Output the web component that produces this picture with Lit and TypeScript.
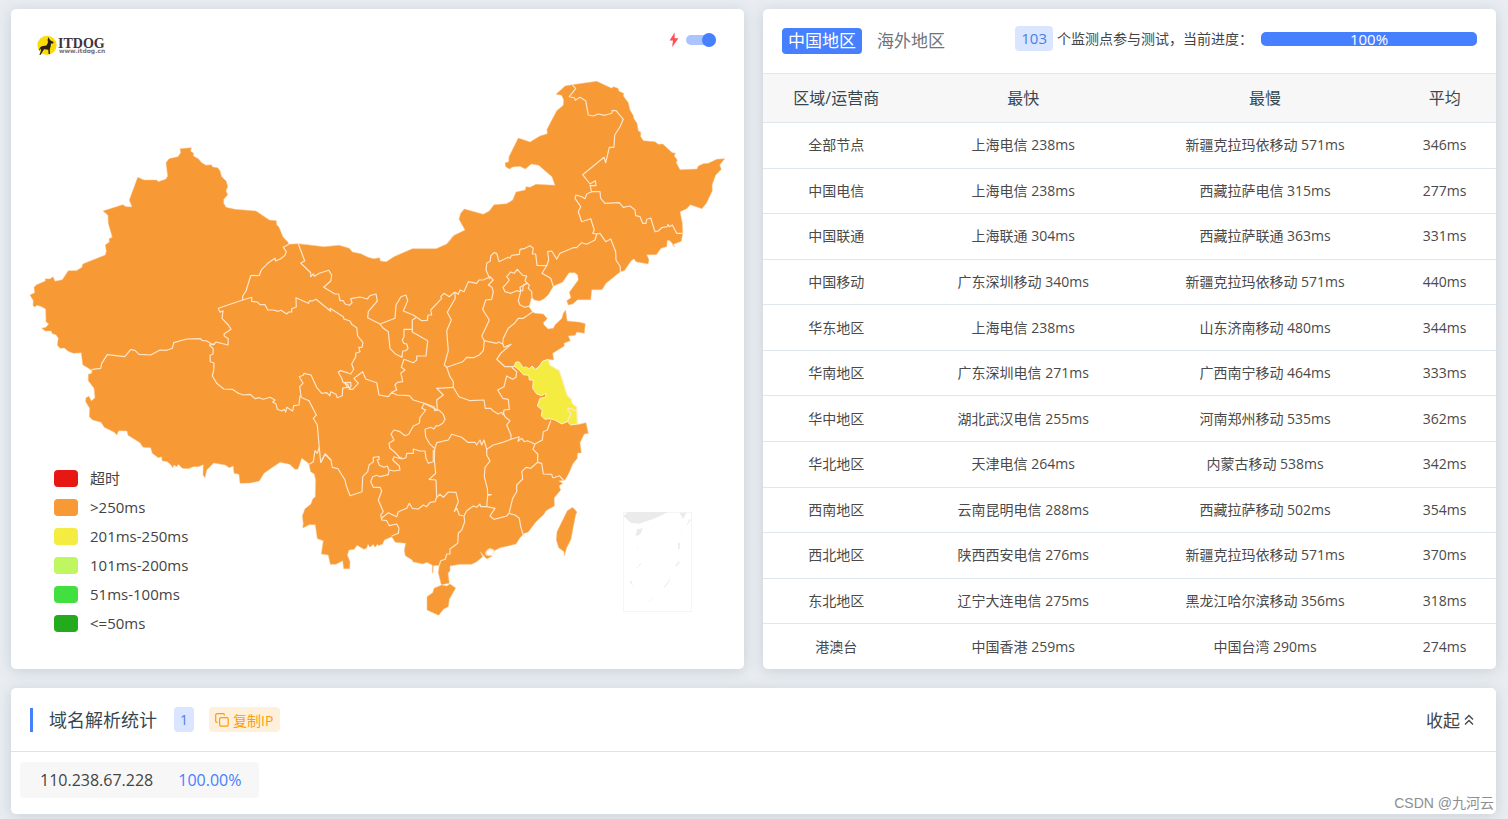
import { LitElement, html, svg, css } from "lit";
import { customElement, property, state } from "lit/decorators.js";

/** Map geometry is stored in sheets: an origin plus points at three units per map unit. */
type Sheet = [x: number, y: number, points: string];

const SHEET_NW = [20, 130] as const;
const SHEET_MID = [280, 230] as const;
const SHEET_NE = [440, 70] as const;
const SHEET_S = [290, 380] as const;
const SHEET_SW = [70, 330] as const;
const SHEET_E = [480, 290] as const;
const SHEET_SEA = [600, 490] as const;

const on = (o: readonly [number, number], points: string): Sheet => [o[0], o[1], points];

const trace = (...sheets: Sheet[]): string =>
  sheets
    .map(([x, y, pts]) =>
      pts
        .trim()
        .split(/\s+/)
        .map((p) => {
          const [px, py] = p.split(",").map(Number);
          return (x + px / 3).toFixed(1) + "," + (y + py / 3).toFixed(1);
        })
        .join(" "),
    )
    .join(" ");

const MAINLAND = trace(
  on(SHEET_NW, `30,495 44,488 42,472 50,464 76,453 76,446 90,447 99,440 105,454 127,449 145,422 169,422 186,412 188,402 256,375 259,363 256,345 268,336 267,326 277,322 265,280 264,256 249,243 308,224 318,230 336,231 328,210 353,142 372,150 410,150 415,155 438,147 443,138 438,98 447,86 474,80 482,68 480,56 514,53 512,64 521,70 520,78 535,86 545,98 558,106 574,104 578,111 593,113 600,122 605,140 619,154 623,170 618,183 623,194 611,208 611,220 618,232 645,238 708,243 748,270 769,272 770,284 777,292 789,321 804,337 806,343 835,341`),
  on(SHEET_MID, `55,41 132,50 177,46 208,55 217,66 242,71 264,82 282,86 299,83 301,93 319,95 342,80 397,56 468,56 500,42 522,17`),
  on(SHEET_NE, `20,523 40,497 75,480 57,448 62,430 73,417 130,433 148,423 162,404 200,401 218,390 228,366 256,360 258,350 270,352 288,343 345,346 336,320 296,286 274,282 256,297 240,289 218,291 208,297 197,290 195,279 206,275 207,260 235,204 270,216 300,198 322,191 321,178 350,122 370,106 371,90 365,76 348,73 375,48 397,44 470,34 515,55 520,50 534,55 537,64 551,70 550,78 565,98 570,120 580,137 581,145 591,160 595,183 602,186 602,200 610,212 645,215 655,223 668,222 697,248 706,249 703,258 712,270 709,278 720,299 771,297 775,288 790,281 805,280 830,268 854,266 839,285 844,298 827,315 816,345 817,362 800,398 786,416 751,404 740,416 720,425 727,460 728,490 724,514 697,524 705,531 700,524 690,512 682,511 680,530 663,535 649,554 620,554 627,570 624,582 588,575 582,566 573,573 553,602 541,605 498,640 486,659 455,659 452,689 413,689 398,702 385,705 380,692 393,683 388,667 415,630 413,615 405,608 387,608 368,636 340,649 325,674`),
  on(SHEET_E, `190,28 178,33 163,30 155,20 147,50 157,66 165,70 190,72 202,86 190,98 192,104 204,117 220,115 225,105 246,85 250,70 257,60 260,85 262,93 300,97 316,101 313,130 290,126 286,136 265,138 271,152 252,160 253,168 218,190 221,210 204,208 210,226 238,242 262,318 274,328 276,340 290,352 292,402`),
  on(SHEET_S, `862,134 888,128 895,160 883,162 870,188 874,218 862,220 862,235 848,252 840,272 832,288 825,300 806,303 818,310 807,318 812,330 793,353 793,378 768,392 762,403 738,425 714,457 703,460 690,473 678,492 650,499 630,503 612,513 610,508 597,506 586,517 590,525 607,528 590,537 575,520 571,516 578,530 560,545 545,553 510,553 480,558 480,572 474,580 478,610 454,614 445,578 448,556 430,557 429,578 427,578 427,556 411,547 398,552 368,545 367,540 346,527 343,510 347,490 316,487 305,470 283,480 278,492 265,497 263,492 255,502 250,493 240,502 234,493 230,504 222,508 201,496 193,508 177,510 172,525 180,545 179,566 161,566 158,542 138,553 121,553 115,525 94,522 100,482 82,476 76,434 58,434 38,444 40,430 37,408 45,386 63,372 68,357 76,350 77,300 73,282 62,275 56,250`),
  on(SHEET_SW, `695,385 684,417 675,418 659,403 630,397 600,417 582,430 568,453 540,459 510,460 507,433 492,430 490,408 478,413 466,405 431,399 410,420 405,443 399,435 400,404 385,410 370,410 355,416 337,415 325,403 321,410 312,405 308,413 303,405 292,395 276,392 275,380 265,383 247,370 242,353 219,352 210,338 174,316 171,303 146,302 140,315 133,307 103,292 93,277 68,270 58,260 59,235 47,215 48,203 57,199 64,213 75,203 72,175 55,152 55,133 65,130 66,122`),
  on(SHEET_NW, `214,720 188,704 184,668 160,670 145,664 133,654 120,655 112,645 115,625 108,614 97,611 94,603 76,603 65,595 78,592 86,582 78,575 77,537 62,529 50,526 45,531 39,527 40,512 30,495`),
);

const HAINAN = trace(on(SHEET_S, `432,625 455,615 470,618 480,612 497,624 478,658 475,680 461,687 446,706 411,690 411,650 428,638`));
const TAIWAN = trace(on(SHEET_S, `848,382 861,396 857,404 850,440 843,478 830,503 823,528 822,515 806,503 799,480 801,455 832,392`));
const JIANGSU = trace(on(SHEET_E, `102,228 108,216 118,216 130,234 136,230 148,236 156,228 167,238 180,226 187,214 204,208 210,226 238,242 262,318 274,328 276,340 290,352 292,402 272,405 262,395 245,402 225,390 207,386 195,388 184,378 187,360 172,348 180,325 197,322 197,310 185,317 170,312 158,295 160,270 148,270 146,256 130,254 118,240`));
const SHANGHAI = trace(on(SHEET_E, `262,395 273,370 263,362 265,354 278,358 290,364`));

const BORDERS: string[] = [
  // Xinjiang, Qinghai, Tibet
  trace(on(SHEET_NW, `806,343 790,352 799,365 795,376 782,386 767,393 765,385 743,400 725,418 718,436 692,437 678,483 668,498 668,510 595,535 600,547 609,542 606,565 625,585 633,598 612,612 613,618 625,626 624,645 588,636 580,645 560,633 545,631 542,626 500,627 461,638 457,655 440,661 420,660 392,675 357,673 345,661 332,659 314,680 262,674 245,700 242,715 218,718 214,722`)),
  trace(
    on(SHEET_NW, `585,641 568,645 580,657 579,673 570,676 571,695 582,699 581,720 577,738 590,760 611,777 637,778 655,790`),
    on(SHEET_SW, `502,188 520,195 540,193 556,206 568,203 580,208 600,202 615,210 608,216 618,222 622,238 635,243 642,238 647,246 650,232 668,243 671,227 687,225 690,197`),
  ),
  trace(
    on(SHEET_NW, `668,510 695,502 695,514 712,516 720,524 735,524 743,540 760,540 775,544 783,541 800,552 806,546 815,546 815,536 829,531 828,503`),
    on(SHEET_MID, `85,220 90,212 97,213 108,208 152,244 150,235 190,260 192,267 210,273 215,283 230,293 233,318 249,338 246,352 236,352 240,365 227,370 227,380 215,402 221,418 212,432 202,428 181,422 175,427 185,445 190,458 212,457 213,467 208,478 205,465 195,460 203,472 188,474 187,497 172,503 168,493 152,485 150,497 140,488 125,490 110,472 93,435 72,430 70,436 58,440 69,460 59,470 63,498`),
  ),
  trace(on(SHEET_SW, `690,197 696,203 717,212 739,255 730,265 742,285 748,355 752,397 765,372 780,388`)),
  trace(on(SHEET_SW, `748,352 742,370 735,362 730,395 718,403`)),
  // Sichuan, Yunnan, Guizhou, Chongqing
  trace(on(SHEET_S, `92,248 106,222 123,240 127,262 144,266 165,300 168,315 180,347 216,335 218,290 233,275 237,255 250,245 250,232 267,230 268,237 262,240 268,256 282,262 292,258 297,270 295,284 270,290 260,286 248,290 242,305 250,322 270,322 275,333 265,360 280,395 272,405 275,418`)),
  trace(on(SHEET_S, `297,270 312,273 330,270 328,258 308,240 312,230 332,236 318,220 300,205 297,190 312,180 303,162 312,150 330,155 345,167 356,163 370,138 388,130 390,112 407,90 395,85 403,70 432,80 434,92 447,90 460,103 465,118 458,130 445,138 438,137 432,147 422,142 405,148 407,170 418,190 434,206`)),
  trace(on(SHEET_S, `332,230 336,237 348,233 350,220 370,220 370,207 390,213 405,213 408,235 415,250 430,245 430,210`)),
  // Gansu, Ningxia, Shaanxi
  trace(on(SHEET_MID, `208,478 218,478 235,460 222,445 248,425 257,447 290,458 297,495 325,500 335,487 350,495 388,497 400,510 430,519 472,540 470,510 490,495 470,475 520,472`)),
  trace(on(SHEET_MID, `335,487 350,480 345,465 352,457 368,455 365,440 362,430 375,420 364,412 372,388 400,398 410,390 410,378 438,378 443,332 397,306 397,270 410,262`)),
  trace(on(SHEET_MID, `397,298 372,298 372,320 367,330 371,340 380,342 384,355 378,362 368,363 366,382 345,371 330,355 325,305 308,293 300,282 345,265 348,225 363,200 378,195 383,212 370,243 400,255 410,262 425,272 442,271 444,255 455,255 452,240 485,205 482,200 492,190 508,200 524,186`)),
  trace(on(SHEET_MID, `55,41 74,93 62,99 92,128 92,140 100,132 103,139 118,130 146,121 155,135 152,153 131,172 165,192 176,192 180,212 190,212 195,222 208,226 216,218 212,206 240,201 262,207 270,197 288,192 292,213 265,245 263,263 300,282`)),
  trace(on(SHEET_MID, `524,186 526,205 502,247 514,270 500,302 505,362 493,405 500,412 510,440 520,455 520,472 537,500 570,512 612,510 616,535 632,535 640,543 655,552 665,547 670,556`)),
  trace(on(SHEET_MID, `524,186 535,193 540,180 552,185 565,155 590,160 597,150 610,150 630,140 640,150 625,165 636,172 640,185 635,208 617,210 608,238 615,250 628,270 614,300 605,318 613,332 610,362 598,375 580,383 560,382 548,395 500,412`)),
  // Hebei, Beijing, Tianjin
  trace(on(SHEET_NE, `150,628 138,600 140,580 151,573 152,558 162,548 170,550 177,575 205,562 210,565 215,556 238,553 240,538 255,535 270,527 280,535 277,552 287,552 291,586 320,587 306,610 332,625 340,649`)),
  trace(on(SHEET_NE, `242,665 230,662 212,670 195,665 189,652 200,640 208,630 200,620 212,606 222,610 232,598 248,616 260,618 255,632 262,640 240,652 242,665 235,692 240,705 255,712 268,708`)),
  trace(on(SHEET_NE, `242,662 248,662 250,645 262,640 268,645 265,655 275,665 276,681`)),
  // Liaoning, Jilin, Heilongjiang
  trace(on(SHEET_NE, `320,587 326,570 323,545 335,543 350,567 360,550 400,533 410,533 425,518 440,523 465,510 470,492`)),
  trace(on(SHEET_NE, `397,44 407,56 388,80 404,84 406,91 420,82 437,92 445,135 460,138 475,132 495,136 515,130 517,121 528,122 550,148 540,170 524,195 522,232 508,232 497,278 492,262 428,314 450,342 466,332 468,347 450,347 455,365 480,365 482,385 495,400 538,398 550,412 570,408 585,420 587,437 600,440 608,460 618,460 620,448 632,444 645,485 655,483 665,473 682,470 684,463 688,470 697,465 710,490 728,490`)),
  trace(on(SHEET_NE, `455,365 440,372 435,386 425,380 408,375 405,385 422,410 415,425 425,455 452,446 463,480 458,490 470,492 480,490 497,515 512,507 527,545 528,570 541,590 541,605`)),
  // Shandong, Henan, Anhui
  trace(on(SHEET_E, `157,66 130,85 115,85 105,98 85,115 70,145 68,160 72,172 93,163 62,190 50,208 75,230 102,230`)),
  trace(on(SHEET_E, `12,152 50,160 56,156 68,162`)),
  trace(on(SHEET_E, `95,232 110,245 108,262 98,268 80,258 72,290 53,300 62,315 68,325 85,328 88,358 72,360 70,375`)),
  // Hubei, Hunan, Jiangxi, Zhejiang, Fujian
  trace(on(SHEET_S, `640,98 645,110 660,122 650,135 663,165 663,178 635,188 610,195 590,208 582,180 575,195 570,180 560,195 555,187 533,187 515,172 485,163 475,180 440,188 434,206 433,240 437,280 418,298 438,300 440,352`)),
  trace(on(SHEET_S, `663,178 688,170 684,184 695,175 703,185 712,182 735,192 757,180 760,155 772,150 782,122`)),
  trace(on(SHEET_S, `735,192 729,208 743,222 743,247 755,250 760,282 785,283 788,293 795,292 808,287 820,300`)),
  trace(on(SHEET_S, `743,247 722,265 708,262 695,275 698,297 680,315 680,335 668,355 657,400 650,408 612,418 600,408 615,385 590,380`)),
  trace(on(SHEET_S, `590,208 590,225 600,243 585,262 583,290 592,325 593,343 604,344 593,346 590,380 572,380 570,372 560,382 550,378 530,392 522,408`)),
  // Guangdong, Guangxi
  trace(on(SHEET_S, `657,400 675,405 688,415 692,440 698,460 703,470`)),
  trace(on(SHEET_S, `440,352 435,365 420,367 410,380 400,375 385,387 367,385 358,370 350,385 325,395 320,410 295,398 275,414 275,420 290,422 298,437 320,432 327,445 325,460 305,468`)),
  trace(on(SHEET_S, `440,352 450,343 460,352 475,336 498,337 505,365 493,395 500,385 508,405 522,408 524,425 515,450 505,460 503,490 480,507 480,522 470,522 466,538 452,542 448,556`)),
  trace(on(SHEET_S, `610,522 612,512 600,506 590,513 588,524 600,526`)),
];

const SEA: string[] = [
  `70,78 85,66 205,66 165,85 118,101 92,98`,
  `238,68 259,68 250,87`,
  `111,118 129,115 121,133 107,139`,
  `234,158 239,158 239,177 234,177`,
  `237,212 239,217 230,229 226,229`,
  `270,86 272,90 262,105 260,103`,
  `210,266 211,269 195,292 191,292`,
  `90,273 95,273 98,292`,
  `123,219 124,221 111,235 109,235`,
  `164,321 150,332 146,333`,
  `109,168 113,175 117,188`,
  `250,122 240,136 237,138`,
].map((p) => trace(on(SHEET_SEA, p)));

interface Row {
  region: string;
  fastest: string;
  slowest: string;
  average: string;
}

const ROWS: Row[] = [
  ["全部节点", "上海电信 238ms", "新疆克拉玛依移动 571ms", "346ms"],
  ["中国电信", "上海电信 238ms", "西藏拉萨电信 315ms", "277ms"],
  ["中国联通", "上海联通 304ms", "西藏拉萨联通 363ms", "331ms"],
  ["中国移动", "广东深圳移动 340ms", "新疆克拉玛依移动 571ms", "440ms"],
  ["华东地区", "上海电信 238ms", "山东济南移动 480ms", "344ms"],
  ["华南地区", "广东深圳电信 271ms", "广西南宁移动 464ms", "333ms"],
  ["华中地区", "湖北武汉电信 255ms", "河南郑州移动 535ms", "362ms"],
  ["华北地区", "天津电信 264ms", "内蒙古移动 538ms", "342ms"],
  ["西南地区", "云南昆明电信 288ms", "西藏拉萨移动 502ms", "354ms"],
  ["西北地区", "陕西西安电信 276ms", "新疆克拉玛依移动 571ms", "370ms"],
  ["东北地区", "辽宁大连电信 275ms", "黑龙江哈尔滨移动 356ms", "318ms"],
  ["港澳台", "中国香港 259ms", "中国台湾 290ms", "274ms"],
].map(([region, fastest, slowest, average]) => ({ region, fastest, slowest, average }));

@customElement("latency-map")
export class LatencyMap extends LitElement {
  static styles = css`
    :host {
      display: block;
      position: relative;
    }
    .map {
      display: block;
      width: 100%;
      height: auto;
    }
    .land {
      fill: #f79934;
      stroke: #f9c48b;
      stroke-width: 0.5;
    }
    .fast {
      fill: #f5ec42;
      stroke: #fdf3c4;
    }
    .border {
      fill: none;
      stroke: #fee6cb;
      stroke-width: 1.2;
      stroke-linejoin: round;
    }
    .sea {
      fill: #ebebeb;
    }
    .frame {
      fill: none;
      stroke: #f5f5f5;
    }
    .top {
      position: absolute;
      top: 22px;
      left: 24px;
      right: 28px;
      display: flex;
      justify-content: space-between;
      align-items: flex-start;
    }
    .logo {
      width: 76px;
      height: 28px;
    }
    .brand {
      font: 700 14px "Liberation Serif", serif;
      fill: #40343a;
    }
    .site {
      font: 700 6px "DejaVu Sans", sans-serif;
      fill: #7a7074;
    }
    .mode {
      display: flex;
      align-items: center;
      gap: 7px;
      height: 18px;
    }
    .bolt {
      width: 10px;
      height: 16px;
      fill: #ff4d52;
    }
    .switch {
      appearance: none;
      position: relative;
      margin: 0;
      width: 30px;
      height: 10px;
      border-radius: 5px;
      background: #abc4ff;
    }
    .switch::before {
      content: "";
      position: absolute;
      top: -2px;
      left: 0;
      width: 14px;
      height: 14px;
      border-radius: 50%;
      background: #4680ff;
    }
    .switch:checked::before {
      left: auto;
      right: 0;
    }
    .legend {
      position: absolute;
      left: 43px;
      bottom: 37px;
      display: grid;
      gap: 12px;
      margin: 0;
      padding: 0;
      list-style: none;
    }
    .item {
      display: flex;
      align-items: center;
      gap: 12px;
      height: 17px;
      font-size: 15px;
      line-height: 16px;
      color: #444;
    }
    .text {
      padding-bottom: 2px;
    }
    .swatch {
      width: 24px;
      height: 17px;
      border-radius: 4px;
    }
    .red {
      background: #e71713;
    }
    .orange {
      background: #f79934;
    }
    .yellow {
      background: #f5ec42;
    }
    .lime {
      background: #bff760;
    }
    .green {
      background: #42df41;
    }
    .dark {
      background: #23aa1d;
    }
  `;

  render() {
    return html`
      <svg class="map" viewBox="11 9 733 660" role="img" aria-label="中国地区">
        <polygon class="land" points=${MAINLAND}></polygon>
        <polygon class="land" points=${HAINAN}></polygon>
        <polygon class="land" points=${TAIWAN}></polygon>
        ${BORDERS.map((b) => svg`<polyline class="border" points=${b}></polyline>`)}
        <polygon class="fast" points=${JIANGSU}></polygon>
        <polyline class="border" points=${SHANGHAI}></polyline>
        <rect class="frame" x="623.5" y="512.5" width="68" height="99"></rect>
        ${SEA.map((s) => svg`<polygon class="sea" points=${s}></polygon>`)}
      </svg>
      <div class="top">
        <svg class="logo" viewBox="35 31 76 28" role="img" aria-label="ITDOG">
          <circle cx="47" cy="45.3" r="9.6" fill="#fadc0a"></circle>
          <path
            fill="#2b1f14"
            d="M48.3 37.2 50.2 40.3 53.6 42 53.2 43.4 51 43.4 50.7 46.3 49.8 49.3 50 54 48.6 54 48.3 49.8 44 49.2 42.6 51.4 40.8 54.8 39.3 54.8 41 51 40.9 48.6 39.9 50 38.9 50.5 40 47.4 41.8 46.2 46.4 45.6 48 42.4 47.6 40Z"
          ></path>
          <text class="brand" x="58" y="48">ITDOG</text>
          <text class="site" x="59" y="53">www.itdog.cn</text>
        </svg>
        <label class="mode">
          <svg class="bolt" viewBox="0 0 10 16" aria-hidden="true">
            <path d="M5.6 0.5 0.6 8.6 4 8.6 3.1 15.2 9.4 6.2 5.6 6.2Z"></path>
          </svg>
          <input class="switch" type="checkbox" aria-label="快速" checked />
        </label>
      </div>
      <ul class="legend">
        <li class="item"><span class="swatch red"></span><span class="text">超时</span></li>
        <li class="item"><span class="swatch orange"></span><span class="text">&gt;250ms</span></li>
        <li class="item"><span class="swatch yellow"></span><span class="text">201ms-250ms</span></li>
        <li class="item"><span class="swatch lime"></span><span class="text">101ms-200ms</span></li>
        <li class="item"><span class="swatch green"></span><span class="text">51ms-100ms</span></li>
        <li class="item"><span class="swatch dark"></span><span class="text">&lt;=50ms</span></li>
      </ul>
    `;
  }
}

@customElement("region-stats")
export class RegionStats extends LitElement {
  static styles = css`
    :host {
      display: flex;
      flex-direction: column;
    }
    .head {
      display: flex;
      align-items: flex-start;
      justify-content: space-between;
      box-sizing: border-box;
      height: 64px;
      padding: 17px 19px 0;
    }
    .tabs {
      display: flex;
      gap: 9px;
      padding-top: 2px;
    }
    .tab {
      height: 26px;
      padding: 0 6px;
      border: 0;
      border-radius: 4px;
      background: none;
      font: inherit;
      font-size: 17px;
      line-height: 26px;
      color: #6c757d;
    }
    .active {
      background: #4680ff;
      color: #fff;
    }
    .progress {
      display: flex;
      align-items: center;
      font-size: 14px;
      line-height: 25px;
      color: #444;
    }
    .count {
      margin-right: 4px;
      padding: 0 6px;
      border-radius: 4px;
      background: #dae6ff;
      font-size: 15px;
      color: #4680e8;
    }
    .bar {
      width: 216px;
      height: 14px;
      margin-left: 8px;
      border-radius: 5px;
      background: #e9ecef;
    }
    .fill {
      height: 14px;
      border-radius: 5px;
      background: #4680ff;
      font-size: 15px;
      line-height: 14px;
      text-align: center;
      color: #fff;
    }
    .table {
      flex: 1;
      width: 100%;
      border-collapse: separate;
      border-spacing: 0;
      table-layout: fixed;
      text-align: center;
      font-size: 14px;
      line-height: 20px;
      color: #4a4a4a;
    }
    .region {
      width: 20%;
    }
    .fastest {
      width: 31%;
    }
    .slowest {
      width: 35%;
    }
    .average {
      width: 14%;
    }
    .table th {
      box-sizing: border-box;
      height: 49px;
      padding: 0;
      border-top: 1px solid #e0e6ec;
      background: #f7f7f7;
      font-size: 16px;
      font-weight: 400;
      color: #37474f;
    }
    .table td {
      padding: 6px 0;
      border-top: 1px solid #dfe7ee;
    }
  `;

  @state() private tab = 0;

  render() {
    return html`
      <div class="head">
        <div class="tabs">
          ${["中国地区", "海外地区"].map(
            (name, i) => html`<button
              type="button"
              class="tab ${this.tab === i ? "active" : ""}"
              @click=${() => (this.tab = i)}
            >${name}</button>`,
          )}
        </div>
        <div class="progress">
          <span class="count">103</span>
          <span>个监测点参与测试，当前进度：</span>
          <div class="bar" role="progressbar" aria-label="当前进度" aria-valuenow="100">
            <div class="fill">100%</div>
          </div>
        </div>
      </div>
      <table class="table">
        <thead>
          <tr>
            <th class="region" scope="col">区域/运营商</th>
            <th class="fastest" scope="col">最快</th>
            <th class="slowest" scope="col">最慢</th>
            <th class="average" scope="col">平均</th>
          </tr>
        </thead>
        <tbody>
          ${ROWS.map(
            (r) => html`<tr>
              <td>${r.region}</td>
              <td>${r.fastest}</td>
              <td>${r.slowest}</td>
              <td>${r.average}</td>
            </tr>`,
          )}
        </tbody>
      </table>
    `;
  }
}

@customElement("dns-stats")
export class DnsStats extends LitElement {
  static styles = css`
    :host {
      display: block;
    }
    .head {
      display: flex;
      align-items: center;
      box-sizing: border-box;
      height: 64px;
      padding: 0 21px 0 19px;
      border-bottom: 1px solid #e0e3e6;
    }
    .title {
      margin: 0 17px 0 0;
      padding-left: 16px;
      border-left: 3px solid #4680ff;
      font-size: 18px;
      font-weight: 400;
      line-height: 24px;
      color: #37474f;
    }
    .count {
      margin-right: 15px;
      padding: 0 6px;
      border-radius: 4px;
      background: #dae6ff;
      font-size: 14px;
      line-height: 25px;
      color: #4680e8;
    }
    .copy {
      display: flex;
      align-items: center;
      gap: 4px;
      height: 25px;
      padding: 0 7px 0 6px;
      border: 0;
      border-radius: 4px;
      background: #fff0dc;
      font: inherit;
      font-size: 14px;
      color: #ff9c07;
    }
    .icon {
      width: 14px;
      height: 14px;
      fill: none;
      stroke: currentColor;
      stroke-width: 1.2;
    }
    .fold {
      display: flex;
      align-items: center;
      gap: 3px;
      margin-left: auto;
      padding: 0;
      border: 0;
      background: none;
      font: inherit;
      font-size: 17px;
      color: #444;
    }
    .chevrons {
      width: 12px;
      height: 12px;
      fill: none;
      stroke: currentColor;
      stroke-width: 1.3;
    }
    .body {
      padding: 10px 9px 16px;
    }
    .record {
      display: inline-flex;
      gap: 25px;
      padding: 6px 18px 6px 20px;
      border-radius: 4px;
      background: #f7f7f7;
      font-size: 16px;
      line-height: 24px;
      color: #444;
      vertical-align: top;
    }
    .share {
      color: #4680ff;
    }
  `;

  @property({ type: Boolean }) folded = false;

  render() {
    return html`
      <div class="head">
        <h2 class="title">域名解析统计</h2>
        <span class="count">1</span>
        <button type="button" class="copy">
          <svg class="icon" viewBox="0 0 14 14" aria-hidden="true">
            <rect x="4.6" y="4.6" width="8.6" height="8.6" rx="1.4"></rect>
            <path d="M2.6 9.4H2A1.3 1.3 0 0 1 .7 8.1V2A1.3 1.3 0 0 1 2 .7h6.1A1.3 1.3 0 0 1 9.4 2v.6"></path>
          </svg>
          <span>复制IP</span>
        </button>
        <button type="button" class="fold" @click=${() => (this.folded = !this.folded)}>
          <span>收起</span>
          <svg class="chevrons" viewBox="0 0 12 12" aria-hidden="true">
            <path d="M2 5.5 6 1.5 10 5.5M2 10.5 6 6.5 10 10.5"></path>
          </svg>
        </button>
      </div>
      ${this.folded
        ? null
        : html`<div class="body">
            <div class="record"><span>110.238.67.228</span><span class="share">100.00%</span></div>
          </div>`}
    `;
  }
}

@customElement("app-root")
export class AppRoot extends LitElement {
  static styles = css`
    :host {
      display: block;
      position: relative;
      box-sizing: border-box;
      min-height: 100vh;
      padding: 9px 12px 5px 11px;
      background: #e9edf2;
      font-family: "Open Sans", "Noto Sans CJK SC", sans-serif;
    }
    .page {
      display: grid;
      grid-template-columns: 1fr 1fr;
      gap: 19px;
    }
    .card {
      min-width: 0;
      border-radius: 5px;
      background: #fff;
      box-shadow: 0 2px 14px rgba(69, 90, 100, 0.2);
    }
    .wide {
      grid-column: 1 / -1;
    }
    .mark {
      position: absolute;
      right: 14px;
      bottom: 6px;
      font-family: "Liberation Sans", "Noto Sans CJK SC", sans-serif;
      font-size: 14px;
      line-height: 20px;
      color: #8e8e8e;
    }
  `;

  render() {
    return html`
      <main class="page">
        <latency-map class="card"></latency-map>
        <region-stats class="card"></region-stats>
        <dns-stats class="card wide"></dns-stats>
      </main>
      <span class="mark">CSDN @九河云</span>
    `;
  }
}
